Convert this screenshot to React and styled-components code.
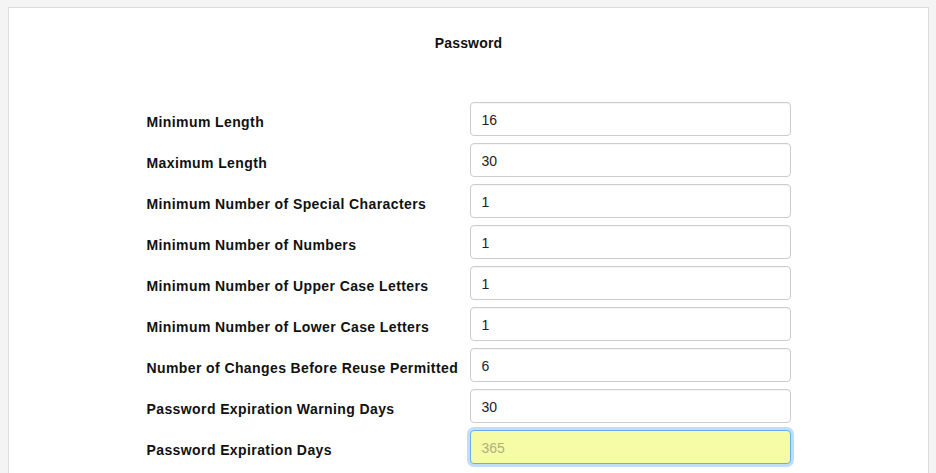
import React from "react";
import styled, { createGlobalStyle } from "styled-components";

const Global = createGlobalStyle`
  html, body { margin: 0; padding: 0; background: #f4f4f4; }
  body { padding: 7px 7px 0 8px; font-family: "Liberation Sans", Arial, sans-serif; overflow: hidden; }
  * { box-sizing: border-box; }
`;

const Panel = styled.div`
  background: #fff;
  border: 1px solid #dcdce0;
  border-bottom: none;
  height: 480px;
  padding-top: 27px;
`;

const Title = styled.h2`
  margin: 0;
  text-align: center;
  font-size: 14px;
  font-weight: bold;
  color: #111;
  line-height: 17px;
  letter-spacing: 0.2px;
`;

const Form = styled.form`
  width: 644px;
  margin: 50px auto 0;
  display: flex;
  flex-direction: column;
  gap: 7px;
`;

const Row = styled.div`
  display: grid;
  grid-template-columns: 323px 321px;
  align-items: center;
`;

const Label = styled.label`
  font-size: 14px;
  font-weight: bold;
  color: #111;
  padding-top: 5px;
  letter-spacing: 0.4px;
  white-space: nowrap;
`;

const Input = styled.input`
  height: 34px;
  width: 100%;
  border: 1px solid ${(p) => (p.$focused ? "#66afe9" : "#ccc")};
  border-radius: 4px;
  padding: 6px 10px 5px 11px;
  font-family: "Liberation Sans", Arial, sans-serif;
  font-size: 14px;
  color: #222;
  background: ${(p) => (p.$focused ? "#f6fba6" : "#fff")};
  box-shadow: ${(p) =>
    p.$focused
      ? "0 0 0 3px rgba(150,200,245,0.6)"
      : "inset 0 1px 1px rgba(0,0,0,.04)"};
  outline: none;
  &::placeholder { color: #aeb07c; opacity: 1; }
`;

const fields = [
  ["Minimum Length", "16"],
  ["Maximum Length", "30"],
  ["Minimum Number of Special Characters", "1"],
  ["Minimum Number of Numbers", "1"],
  ["Minimum Number of Upper Case Letters", "1"],
  ["Minimum Number of Lower Case Letters", "1"],
  ["Number of Changes Before Reuse Permitted", "6"],
  ["Password Expiration Warning Days", "30"],
];

export default function App() {
  return (
    <>
      <Global />
      <Panel>
        <Title>Password</Title>
        <Form onSubmit={(e) => e.preventDefault()}>
          {fields.map(([label, value]) => (
            <Row key={label}>
              <Label>{label}</Label>
              <Input defaultValue={value} />
            </Row>
          ))}
          <Row>
            <Label>Password Expiration Days</Label>
            <Input $focused placeholder="365" />
          </Row>
        </Form>
      </Panel>
    </>
  );
}
